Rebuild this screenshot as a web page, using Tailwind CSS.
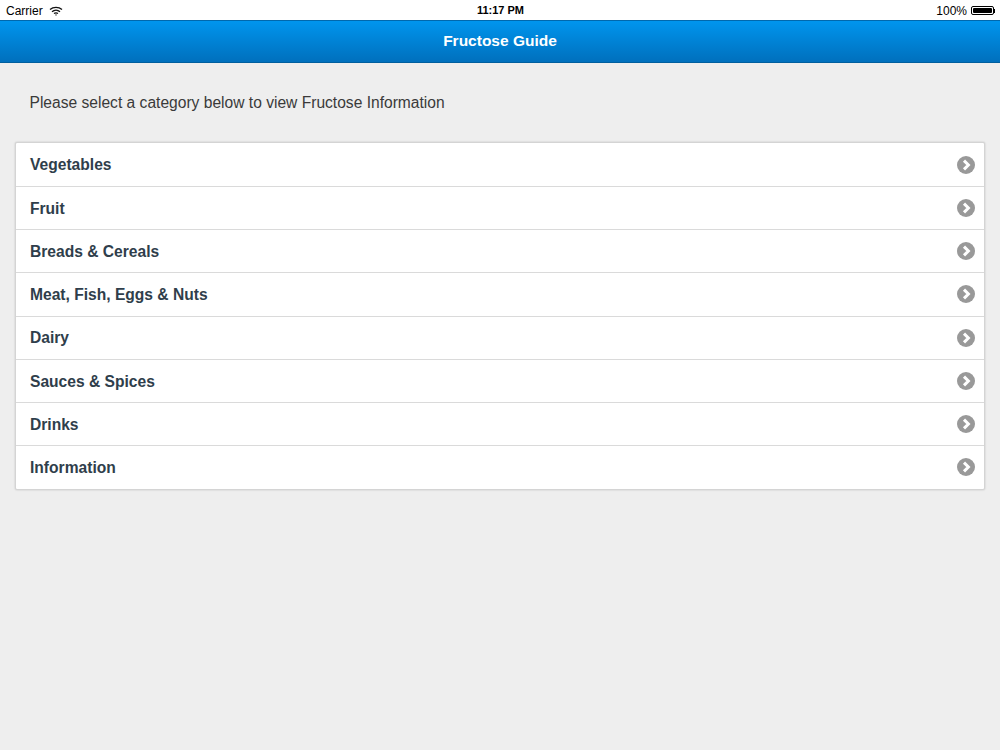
<!DOCTYPE html>
<html lang="en">
<head>
    <meta charset="UTF-8">
    <title>Fructose Guide</title>
    <script src="https://cdn.jsdelivr.net/npm/@tailwindcss/browser@4"></script>
</head>
<body class="bg-[#eeeeee] font-['Liberation_Sans',Arial,sans-serif] w-[1000px] h-[750px] overflow-hidden">
    <!-- Status bar -->
    <div class="h-5 bg-white text-black text-[12px] pl-[6px] pr-[5px] pt-[1px] grid grid-cols-3 items-center">
        <div class="flex items-center gap-[6px]">
            <span>Carrier</span>
            <svg width="14" height="10" viewBox="0 0 14 10" fill="none" stroke="#111" stroke-width="1.3">
                <path d="M1 3.6C4.3 .6 9.7 .6 13 3.6"/>
                <path d="M3 5.7C5.3 3.7 8.7 3.7 11 5.7"/>
                <path d="M5 7.6C6.2 6.7 7.8 6.7 9 7.6"/>
                <circle cx="7" cy="8.9" r=".7" fill="#111" stroke="none"/>
            </svg>
        </div>
        <div class="text-center font-bold text-[11px]">11:17 PM</div>
        <div class="flex items-center justify-end gap-[4px]">
            <span>100%</span>
            <div class="flex items-center">
                <div class="w-[23px] h-[9px] border border-black rounded-[2px] p-[1px]"><div class="h-full bg-black rounded-[1px]"></div></div>
                <div class="w-[1px] h-1 bg-black"></div>
            </div>
        </div>
    </div>

    <!-- Header -->
    <header class="h-[43px] pb-[2px] bg-gradient-to-b from-[#0095ee] to-[#0070bd] border-t border-t-[#0068ad] border-b border-b-[#005f9e] flex items-center justify-center">
        <h1 class="text-white font-bold text-[15.5px]">Fructose Guide</h1>
    </header>

    <main class="px-[15px]">
        <p class="pl-[14.5px] pt-[30.5px] pb-[30.5px] text-[#3a3a3a] text-[15.6px] leading-[18px]">Please select a category below to view Fructose Information</p>

        <!-- Categories -->
        <ul class="h-[347.5px] pt-[0.5px] flex flex-col bg-white border border-[#d4d4d4] rounded-[2px] shadow-[0_0_2px_rgba(0,0,0,0.2)] divide-y divide-[#dadada]">
            <li class="flex-1 flex items-center justify-between pl-[14px] pr-[9px] text-[15.6px] font-bold text-[#2f3e4b]"><span class="pt-[1px]">Vegetables</span>
                <svg width="18" height="18" viewBox="0 0 18 18"><circle cx="9" cy="9" r="9" fill="#999999"/><path d="M7 4.6L11.4 9L7 13.4" fill="none" stroke="#fff" stroke-width="3"/></svg>
            </li>
            <li class="flex-1 flex items-center justify-between pl-[14px] pr-[9px] text-[15.6px] font-bold text-[#2f3e4b]"><span class="pt-[1px]">Fruit</span>
                <svg width="18" height="18" viewBox="0 0 18 18"><circle cx="9" cy="9" r="9" fill="#999999"/><path d="M7 4.6L11.4 9L7 13.4" fill="none" stroke="#fff" stroke-width="3"/></svg>
            </li>
            <li class="flex-1 flex items-center justify-between pl-[14px] pr-[9px] text-[15.6px] font-bold text-[#2f3e4b]"><span class="pt-[1px]">Breads &amp; Cereals</span>
                <svg width="18" height="18" viewBox="0 0 18 18"><circle cx="9" cy="9" r="9" fill="#999999"/><path d="M7 4.6L11.4 9L7 13.4" fill="none" stroke="#fff" stroke-width="3"/></svg>
            </li>
            <li class="flex-1 flex items-center justify-between pl-[14px] pr-[9px] text-[15.6px] font-bold text-[#2f3e4b]"><span class="pt-[1px]">Meat, Fish, Eggs &amp; Nuts</span>
                <svg width="18" height="18" viewBox="0 0 18 18"><circle cx="9" cy="9" r="9" fill="#999999"/><path d="M7 4.6L11.4 9L7 13.4" fill="none" stroke="#fff" stroke-width="3"/></svg>
            </li>
            <li class="flex-1 flex items-center justify-between pl-[14px] pr-[9px] text-[15.6px] font-bold text-[#2f3e4b]"><span class="pt-[1px]">Dairy</span>
                <svg width="18" height="18" viewBox="0 0 18 18"><circle cx="9" cy="9" r="9" fill="#999999"/><path d="M7 4.6L11.4 9L7 13.4" fill="none" stroke="#fff" stroke-width="3"/></svg>
            </li>
            <li class="flex-1 flex items-center justify-between pl-[14px] pr-[9px] text-[15.6px] font-bold text-[#2f3e4b]"><span class="pt-[1px]">Sauces &amp; Spices</span>
                <svg width="18" height="18" viewBox="0 0 18 18"><circle cx="9" cy="9" r="9" fill="#999999"/><path d="M7 4.6L11.4 9L7 13.4" fill="none" stroke="#fff" stroke-width="3"/></svg>
            </li>
            <li class="flex-1 flex items-center justify-between pl-[14px] pr-[9px] text-[15.6px] font-bold text-[#2f3e4b]"><span class="pt-[1px]">Drinks</span>
                <svg width="18" height="18" viewBox="0 0 18 18"><circle cx="9" cy="9" r="9" fill="#999999"/><path d="M7 4.6L11.4 9L7 13.4" fill="none" stroke="#fff" stroke-width="3"/></svg>
            </li>
            <li class="flex-1 flex items-center justify-between pl-[14px] pr-[9px] text-[15.6px] font-bold text-[#2f3e4b]"><span class="pt-[1px]">Information</span>
                <svg width="18" height="18" viewBox="0 0 18 18"><circle cx="9" cy="9" r="9" fill="#999999"/><path d="M7 4.6L11.4 9L7 13.4" fill="none" stroke="#fff" stroke-width="3"/></svg>
            </li>
        </ul>
    </main>
</body>
</html>
